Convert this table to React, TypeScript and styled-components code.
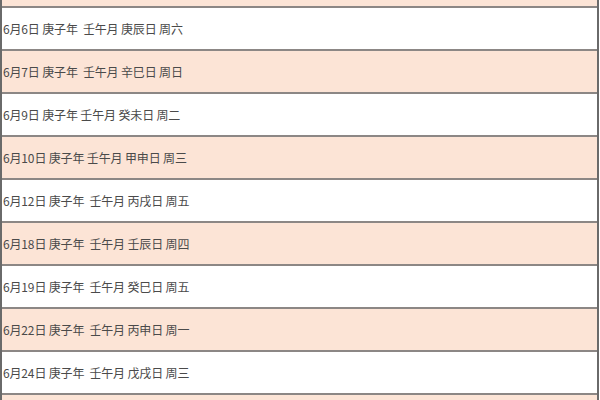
import React from "react";
import styled, { createGlobalStyle } from "styled-components";

const GlobalStyle = createGlobalStyle`
  html, body {
    margin: 0;
    padding: 0;
    background: #ffffff;
    overflow: hidden;
  }
`;

const Viewport = styled.div`
  width: 600px;
  height: 400px;
  overflow: hidden;
`;

const Table = styled.div`
  /* list is scrolled: only the bottom of the first row shows */
  margin-top: -35px;
  width: 599px;
  border-left: 2px solid #6a6a6a;
  border-right: 2px solid #6a6a6a;
  box-sizing: border-box;
  display: flex;
  flex-direction: column;
`;

const Row = styled.div<{ $shaded: boolean }>`
  height: 41px;
  display: flex;
  align-items: center;
  padding-left: 1px;
  background: ${(p) => (p.$shaded ? "#fce4d6" : "#ffffff")};
  border-bottom: 2px solid #8c8785;
  font-family: "Noto Sans CJK SC", "Noto Sans", sans-serif;
  font-size: 12px;
  letter-spacing: -0.15px;
  color: #4a4a4a;
  white-space: pre;
`;

// first and last entries are only partly scrolled into view, their text is off screen
const rows = [
  "",
  "6月6日 庚子年  壬午月 庚辰日 周六",
  "6月7日 庚子年  壬午月 辛巳日 周日",
  "6月9日 庚子年 壬午月 癸未日 周二",
  "6月10日 庚子年 壬午月 甲申日 周三",
  "6月12日 庚子年  壬午月 丙戌日 周五",
  "6月18日 庚子年  壬午月 壬辰日 周四",
  "6月19日 庚子年  壬午月 癸巳日 周五",
  "6月22日 庚子年  壬午月 丙申日 周一",
  "6月24日 庚子年  壬午月 戊戌日 周三",
  "",
];

const App = () => {
  return (
    <>
      <GlobalStyle />
      <Viewport>
        <Table>
          {rows.map((text, index) => (
            <Row key={index} $shaded={index % 2 === 0}>
              {text}
            </Row>
          ))}
        </Table>
      </Viewport>
    </>
  );
};

export default App;
